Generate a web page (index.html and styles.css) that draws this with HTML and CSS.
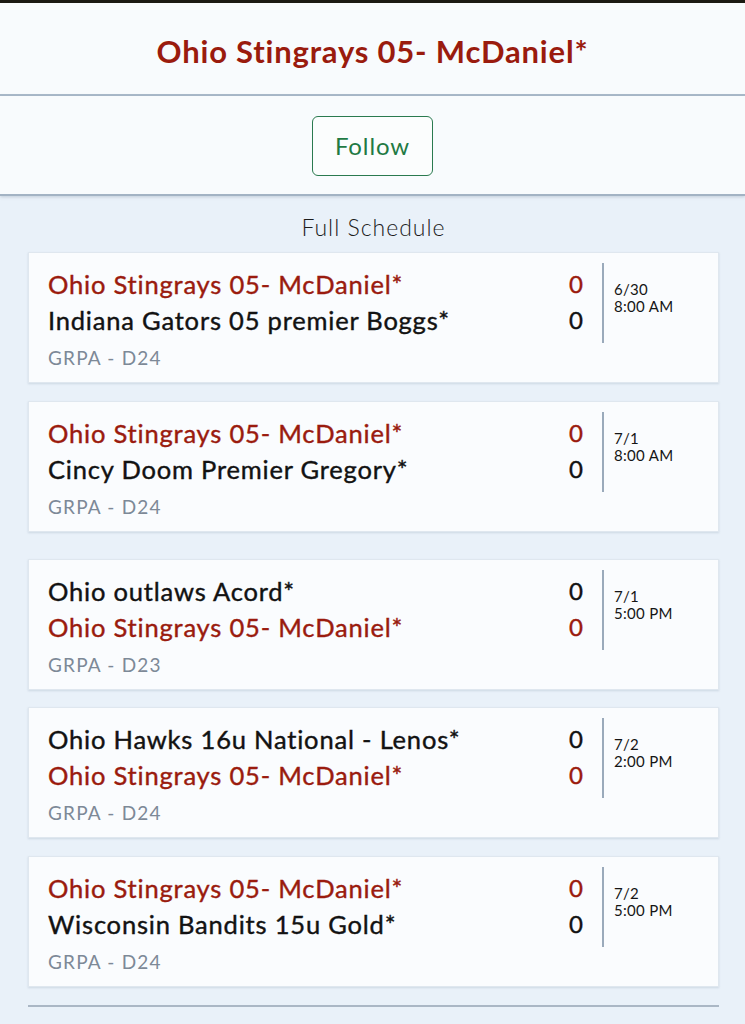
FILE: index.html
```html
<!DOCTYPE html>
<html>
<head>
<meta charset="utf-8">
<link rel="stylesheet" href="styles.css">
</head>
<body>
<div class="topbar"></div>
<header class="header"><h1 class="title">Ohio Stingrays 05- McDaniel*</h1></header>
<div class="follow-bar"><button class="follow">Follow</button></div>
<main class="schedule">
  <div class="heading">Full Schedule</div>

  <div class="card">
    <div class="teams">
      <div class="row red"><span>Ohio Stingrays 05- McDaniel*</span><span class="score">0</span></div>
      <div class="row"><span>Indiana Gators 05 premier Boggs*</span><span class="score">0</span></div>
      <div class="meta">GRPA - D24</div>
    </div>
    <div class="time">6/30<br>8:00 AM</div>
  </div>

  <div class="card card-gap-lg">
    <div class="teams">
      <div class="row red"><span>Ohio Stingrays 05- McDaniel*</span><span class="score">0</span></div>
      <div class="row"><span>Cincy Doom Premier Gregory*</span><span class="score">0</span></div>
      <div class="meta">GRPA - D24</div>
    </div>
    <div class="time">7/1<br>8:00 AM</div>
  </div>

  <div class="card card-gap-sm">
    <div class="teams">
      <div class="row"><span>Ohio outlaws Acord*</span><span class="score">0</span></div>
      <div class="row red"><span>Ohio Stingrays 05- McDaniel*</span><span class="score">0</span></div>
      <div class="meta">GRPA - D23</div>
    </div>
    <div class="time">7/1<br>5:00 PM</div>
  </div>

  <div class="card">
    <div class="teams">
      <div class="row"><span>Ohio Hawks 16u National - Lenos*</span><span class="score">0</span></div>
      <div class="row red"><span>Ohio Stingrays 05- McDaniel*</span><span class="score">0</span></div>
      <div class="meta">GRPA - D24</div>
    </div>
    <div class="time">7/2<br>2:00 PM</div>
  </div>

  <div class="card">
    <div class="teams">
      <div class="row red"><span>Ohio Stingrays 05- McDaniel*</span><span class="score">0</span></div>
      <div class="row"><span>Wisconsin Bandits 15u Gold*</span><span class="score">0</span></div>
      <div class="meta">GRPA - D24</div>
    </div>
    <div class="time">7/2<br>5:00 PM</div>
  </div>

  <div class="endline"></div>
</main>
</body>
</html>
```

FILE: styles.css
```css
* { box-sizing: border-box; }
html, body { margin: 0; padding: 0; }
body {
  font-family: Lato, "Open Sans", sans-serif;
  background: #e9f1f9;
  height: 1024px;
  overflow: hidden;
}
.topbar { height: 3px; background: #1b1a12; }
.header {
  height: 93px;
  background: #f8fbfd;
  border-bottom: 2px solid #a9b9c9;
  display: flex;
  align-items: center;
  justify-content: center;
}
.title {
  margin: 0;
  font-size: 31px;
  font-weight: 700;
  letter-spacing: 0.8px;
  color: #9a1b0e;
  padding-top: 4px;
}
.follow-bar {
  height: 100px;
  background: #f8fbfd;
  border-bottom: 2px solid #a3b3c4;
  box-shadow: 0 1px 3px rgba(120,140,160,0.35);
  display: flex;
  justify-content: center;
  padding-top: 20px;
}
.follow {
  width: 121px;
  height: 60px;
  border: 1.5px solid #2a7a4f;
  border-radius: 6px;
  background: #fbfdfd;
  color: #1f7a44;
  font-family: Lato, sans-serif;
  font-size: 24px;
  font-weight: 400;
  letter-spacing: 0.9px;
  padding: 0 0 2px;
}
.schedule { padding: 16px 26px 0 28px; }
.heading {
  text-align: center;
  font-size: 23px;
  font-weight: 300;
  letter-spacing: 1px;
  color: #1c1c1c;
  line-height: 30px;
  margin-bottom: 10px;
}
.card {
  display: flex;
  background: #fafcfe;
  border: 1px solid #dfe7ef;
  box-shadow: 0 1px 2px rgba(140,160,180,0.3);
  height: 131px;
  margin-bottom: 18px;
  padding: 13px 0 0 19px;
}
.card-gap-lg { margin-bottom: 27px; }
.card-gap-sm { margin-bottom: 17px; }
.teams { flex: 1; }
.row {
  display: flex;
  justify-content: space-between;
  font-size: 25.5px;
  line-height: 36px;
  font-weight: 400;
  letter-spacing: 0.8px;
  -webkit-text-stroke: 0.4px currentColor;
  color: #121212;
}
.row.red { color: #9a1b0e; }
.score { padding-right: 19px; letter-spacing: 0; font-size: 24px; }
.meta {
  margin-top: 8px;
  font-size: 19px;
  line-height: 24px;
  letter-spacing: 1.2px;
  color: #7d8997;
}
.time {
  width: 116px;
  align-self: flex-start;
  margin-top: -3px;
  height: 80px;
  border-left: 2px solid #9aaabb;
  padding: 18px 0 0 10px;
  font-size: 15px;
  line-height: 17px;
  letter-spacing: 0.3px;
  color: #151515;
}
.endline {
  height: 2px;
  background: #aab7c5;
  margin-top: 5px;
}
```
